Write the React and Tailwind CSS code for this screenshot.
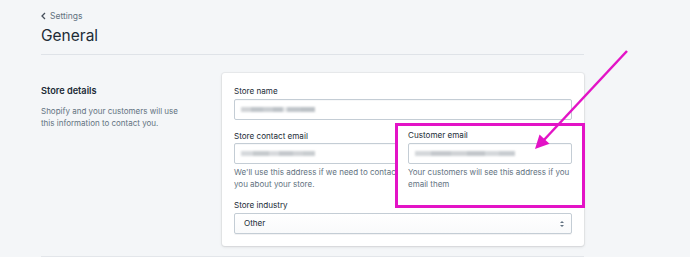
import React from 'react';

const Blur = ({ parts }) => (
  <div className="flex items-center blur-[1px]">
    {parts.map((p, i) => (
      <span key={i} className="h-[5px]" style={{ width: p[0], background: p[1] }} />
    ))}
  </div>
);

const Field = ({ children, className = '' }) => (
  <div
    className={
      'flex h-[21px] items-center rounded-[2px] border border-[#c4cdd5] bg-white pl-[6px] shadow-[inset_0_1px_0_rgba(99,115,129,0.05)] ' +
      className
    }
  >
    {children}
  </div>
);

const Label = ({ children }) => (
  <div className="text-[8.1px] leading-[12px] text-[#212b36]">{children}</div>
);

const Help = ({ children }) => (
  <div className="text-[8px] leading-[12px] text-[#637381]">{children}</div>
);

const App = () => {
  return (
    <div className="relative h-[257px] w-[690px] overflow-hidden bg-[#f4f6f8] font-['Inter',sans-serif]">
      <div className="ml-[41px] w-[543px] pt-[10px]">
        {/* breadcrumb */}
        <div className="flex h-[12px] items-center gap-[4px] text-[8.5px] text-[#637381]">
          <svg width="5" height="8" viewBox="0 0 5 8" className="text-[#454f5b]">
            <path d="M4 1 L1 4 L4 7" fill="none" stroke="currentColor" strokeWidth="1.3" />
          </svg>
          <span>Settings</span>
        </div>
        <h1 className="mt-[4px] text-[15.5px] leading-[20px] text-[#212b36]">General</h1>
        <div className="mt-[8px] border-t border-[#dfe3e8]" />

        {/* section */}
        <div className="mt-[18px] flex">
          <div className="w-[181px] pt-[12px]">
            <div className="text-[9.2px] font-semibold leading-[12px] text-[#212b36]">Store details</div>
            <div className="mt-[9px] w-[150px] text-[8px] leading-[11.5px] text-[#637381]">
              Shopify and your customers will use this information to contact you.
            </div>
          </div>

          <div className="w-[362px] rounded-[3px] bg-white px-[12px] pt-[12px] pb-[12px] shadow-[0_0_0_1px_rgba(63,63,68,0.05),0_1px_3px_0_rgba(63,63,68,0.15)]">
            <Label>Store name</Label>
            <Field className="mt-[2px]">
              <Blur parts={[[10, '#d0d3d6'], [12, '#bfc4c9'], [10, '#c9cdd1'], [10, '#bdc2c7'], [4, '#e6e8ea'], [14, '#c0c5ca'], [14, '#bcc1c6']]} />
            </Field>

            <div className="mt-[10px]">
              <Label>Store contact email</Label>
            </div>
            <Field className="mt-[1px]">
              <Blur parts={[[12, '#d6d9dc'], [16, '#c6cacd'], [10, '#d7d9dc'], [14, '#c4c8cc'], [10, '#d0d3d6'], [12, '#c9cdd0']]} />
            </Field>
            <div className="mt-[2px] whitespace-nowrap">
              <Help>We'll use this address if we need to contact</Help>
              <Help>you about your store.</Help>
            </div>

            <div className="mt-[9px]">
              <Label>Store industry</Label>
            </div>
            <div className="mt-[2px] flex h-[21px] items-center justify-between rounded-[2px] border border-[#c4cdd5] bg-gradient-to-b from-white to-[#f9fafb] pl-[9px] pr-[6px] shadow-[0_1px_0_rgba(22,29,37,0.05)]">
              <span className="text-[8.1px] text-[#212b36]">Other</span>
              <svg width="6" height="8" viewBox="0 0 6 8">
                <path d="M1 3 L3 1 L5 3 Z M1 5 L3 7 L5 5 Z" fill="#637381" />
              </svg>
            </div>
          </div>
        </div>

        <div className="mt-[10px] border-t border-[#e3e6ea]" />
      </div>

      {/* annotation box */}
      <div className="absolute left-[395px] top-[123px] h-[85px] w-[190px] border-[3px] border-[#e313c6] bg-white pl-[10px] pt-[3px]">
        <Label>Customer email</Label>
        <Field className="mt-[2px] w-[164px]">
          <Blur parts={[[16, '#d4d7da'], [20, '#c4c8cc'], [16, '#cfd2d5'], [18, '#c2c6ca'], [14, '#d4d7da'], [16, '#c8ccd0']]} />
        </Field>
        <div className="mt-[2px]">
          <Help>Your customers will see this address if you</Help>
          <Help>email them</Help>
        </div>
      </div>

      {/* annotation arrow */}
      <svg className="pointer-events-none absolute left-0 top-0" width="690" height="257">
        <line x1="627" y1="51" x2="543" y2="141" stroke="#e313c6" strokeWidth="2.5" />
        <path d="M535 149 L539.5 134.5 L549.5 143.8 Z" fill="#e313c6" />
      </svg>
    </div>
  );
};

export default App;
